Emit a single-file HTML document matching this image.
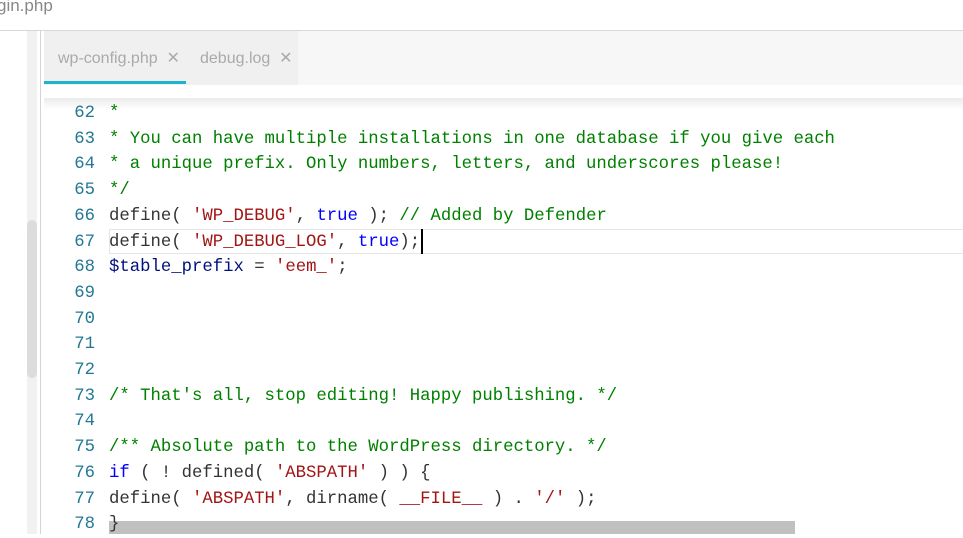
<!DOCTYPE html>
<html><head><style>
*{margin:0;padding:0;box-sizing:border-box}
body{width:963px;height:534px;overflow:hidden;background:#fff;position:relative;font-family:"Liberation Sans",sans-serif}
.title{position:absolute;left:-3px;top:-4px;font-size:17px;color:#888}
.hline{position:absolute;left:0;top:30px;width:963px;height:1px;background:#d8d8d8}
.strip{position:absolute;left:27px;top:31px;width:10px;height:503px;background:#f1f1f1}
.thumb{position:absolute;left:27px;top:220px;width:10px;height:158px;background:#dcdcdc;border-radius:5px}
.vline{position:absolute;left:40px;top:31px;width:1px;height:503px;background:#d4d4d4}
.tabs{position:absolute;left:44px;top:31px;width:919px;height:54px;background:#f7f7f7}
.tabsl{position:absolute;left:44px;top:31px;width:254px;height:54px;background:#f0f0f0}
.tab{position:absolute;top:48px;font-size:16px;color:#aaa}
.ul{position:absolute;left:44px;top:81px;width:142px;height:3px;background:#1fb3cf}
.shadow{position:absolute;left:44px;top:98px;width:919px;height:12px;background:linear-gradient(#ececec,#fff)}
.code{position:absolute;left:44px;top:101px;font-family:"Liberation Mono",monospace;font-size:17.3px;line-height:25.7px;white-space:pre;color:#333}
.ln{display:inline-block;width:51px;text-align:right;color:#237893;margin-right:14px}
.c{color:#008000}.s{color:#a31515}.k{color:#0000ff}.v{color:#001080}
.cur{position:absolute;left:109px;top:229px;width:854px;height:25px;border:1px solid #e6e6e6;border-right:none}
.caret{position:absolute;left:421px;top:229px;width:2px;height:25px;background:#000}
.sel{position:absolute;left:109px;top:521px;width:686px;height:13px;background:#c0c0c0}
</style></head><body>
<div class="title">gin.php</div>
<div class="hline"></div>
<div class="strip"></div><div class="thumb"></div><div class="vline"></div>
<div class="tabs"></div><div class="tabsl"></div>
<div class="tab" style="left:58px">wp-config.php&nbsp; ✕</div>
<div class="tab" style="left:200px">debug.log&nbsp; ✕</div>
<div class="ul"></div>
<div class="shadow"></div>
<div class="cur"></div>
<div class="sel"></div>
<div class="code"><span class="ln">62</span><span class="c">*</span>
<span class="ln">63</span><span class="c">* You can have multiple installations in one database if you give each</span>
<span class="ln">64</span><span class="c">* a unique prefix. Only numbers, letters, and underscores please!</span>
<span class="ln">65</span><span class="c">*/</span>
<span class="ln">66</span>define( <span class="s">'WP_DEBUG'</span>, <span class="k">true</span> ); <span class="c">// Added by Defender</span>
<span class="ln">67</span>define( <span class="s">'WP_DEBUG_LOG'</span>, <span class="k">true</span>);
<span class="ln">68</span><span class="v">$table_prefix</span> = <span class="s">'eem_'</span>;
<span class="ln">69</span>
<span class="ln">70</span>
<span class="ln">71</span>
<span class="ln">72</span>
<span class="ln">73</span><span class="c">/* That's all, stop editing! Happy publishing. */</span>
<span class="ln">74</span>
<span class="ln">75</span><span class="c">/** Absolute path to the WordPress directory. */</span>
<span class="ln">76</span><span class="k">if</span> ( ! defined( <span class="s">'ABSPATH'</span> ) ) {
<span class="ln">77</span>define( <span class="s">'ABSPATH'</span>, dirname( <span class="s">__FILE__</span> ) . <span class="s">'/'</span> );
<span class="ln">78</span>}</div>
<div class="caret"></div>
</body></html>
